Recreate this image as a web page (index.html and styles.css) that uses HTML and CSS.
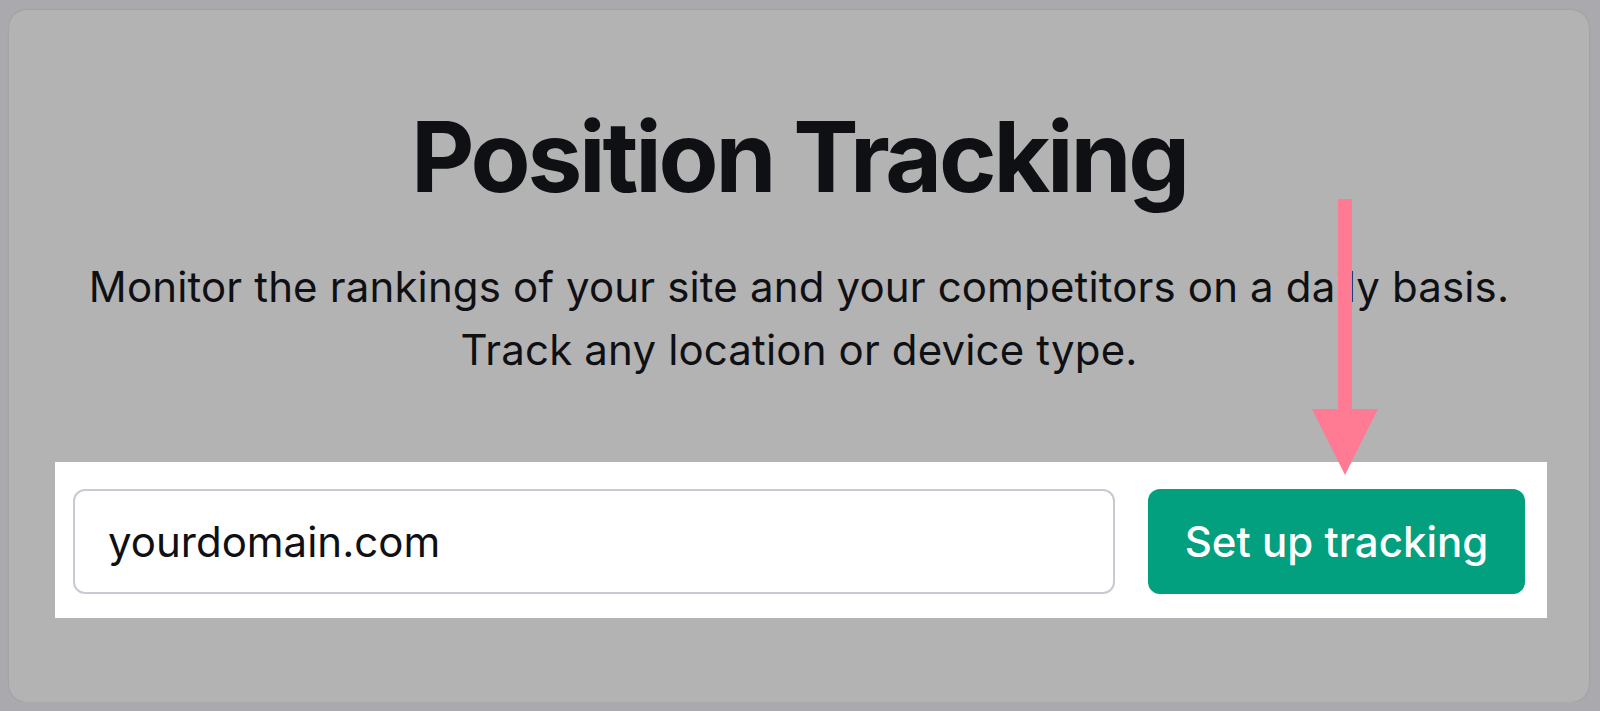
FILE: index.html
```html
<!DOCTYPE html>
<html lang="en">
<head>
    <meta charset="UTF-8">
    <meta name="viewport" content="width=device-width, initial-scale=1.0">
    <title>Position Tracking</title>
    <link rel="stylesheet" href="styles.css">
</head>
<body>
<div class="card">
    <h1 class="title">Position Tracking</h1>
    <p class="lead">Monitor the rankings of your site and your competitors on a daily basis.<br>Track any location or device type.</p>
    <div class="form-strip">
        <div class="domain-input">yourdomain.com</div>
        <button class="setup-btn">Set up tracking</button>
    </div>
    <svg class="pointer" width="66" height="276" viewBox="0 0 66 276">
        <rect x="26" y="0" width="14" height="214" fill="#ff7b93"/>
        <polygon points="0,210 66,210 33,276" fill="#ff7b93"/>
    </svg>
</div>
</body>
</html>
```

FILE: styles.css
```css
body {
    margin: 0;
    background-color: #a9a9ae;
    font-family: Inter, "Noto Sans", sans-serif;
}

.card {
    position: relative;
    margin: 10px 11px 0 9px;
    height: 692px;
    border-radius: 18px;
    background-color: #b3b3b3;
    box-shadow: 0 0 2px rgba(0, 0, 0, 0.15);
    padding-top: 88px;
    box-sizing: border-box;
    text-align: center;
    color: #0f1014;
}

.title {
    margin: 0;
    font-size: 98px;
    font-weight: 700;
    line-height: 118px;
    letter-spacing: -3.2px;
}

.lead {
    margin: 39px 0 0;
    font-size: 42px;
    line-height: 63px;
    font-weight: 400;
    letter-spacing: 0.15px;
}

.form-strip {
    display: flex;
    gap: 33px;
    margin: 81px 42px 0 46px;
    padding: 27px 22px 24px 18px;
    background-color: #fff;
    text-align: left;
}

.domain-input {
    flex: 1;
    height: 105px;
    box-sizing: border-box;
    border: 2px solid #c8c9d2;
    border-radius: 12px;
    padding-left: 33px;
    display: flex;
    align-items: center;
    font-size: 42px;
    color: #0f1014;
}

.setup-btn {
    width: 377px;
    height: 105px;
    border: none;
    border-radius: 12px;
    background-color: #02a07e;
    color: #fff;
    font-family: Inter, "Noto Sans", sans-serif;
    font-size: 42px;
    font-weight: 500;
}

.pointer {
    position: absolute;
    left: 1303px;
    top: 189px;
}
```
